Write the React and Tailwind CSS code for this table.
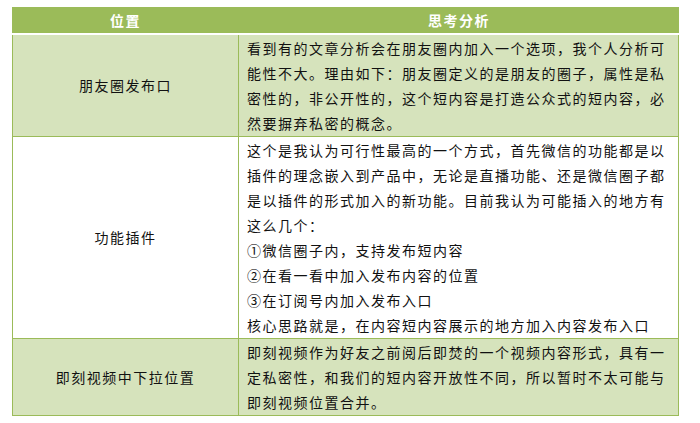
import React from "react";

const rows = [
  {
    label: "朋友圈发布口",
    bg: "bg-[#d6e3bc]",
    lines: [
      "看到有的文章分析会在朋友圈内加入一个选项，我个人分析可",
      "能性不大。理由如下：朋友圈定义的是朋友的圈子，属性是私",
      "密性的，非公开性的，这个短内容是打造公众式的短内容，必",
      "然要摒弃私密的概念。",
    ],
  },
  {
    label: "功能插件",
    bg: "bg-white",
    lines: [
      "这个是我认为可行性最高的一个方式，首先微信的功能都是以",
      "插件的理念嵌入到产品中，无论是直播功能、还是微信圈子都",
      "是以插件的形式加入的新功能。目前我认为可能插入的地方有",
      "这么几个：",
      "①微信圈子内，支持发布短内容",
      "②在看一看中加入发布内容的位置",
      "③在订阅号内加入发布入口",
      "核心思路就是，在内容短内容展示的地方加入内容发布入口",
    ],
  },
  {
    label: "即刻视频中下拉位置",
    bg: "bg-[#d6e3bc]",
    lines: [
      "即刻视频作为好友之前阅后即焚的一个视频内容形式，具有一",
      "定私密性，和我们的短内容开放性不同，所以暂时不太可能与",
      "即刻视频位置合并。",
    ],
  },
];

export default function App() {
  return (
    <div
      className="w-[700px] h-[423px] bg-white pl-[12px] pt-[7px] overflow-hidden"
      style={{ fontFamily: '"Noto Sans CJK SC", "Noto Sans", sans-serif' }}
    >
      <div className="w-[667px]">
        <div className="flex h-[28px] bg-[#9bbb59] border-b-2 border-white text-white font-bold text-[14px] tracking-[1.5px]">
          <div className="w-[227px] flex items-center justify-center">位置</div>
          <div className="flex-1 flex items-center justify-center">思考分析</div>
        </div>
        {rows.map((r, i) => (
          <div
            key={i}
            className={`flex border-x border-b border-[#9bbb59] ${r.bg} text-[14px] tracking-[1.5px] text-[#111] leading-[25px]`}
          >
            <div className="w-[226px] border-r border-[#9bbb59] flex items-center justify-center">
              {r.label}
            </div>
            <div className="flex-1 pl-[8px] pt-px flex flex-col">
              {r.lines.map((l, j) => (
                <div key={j} className="whitespace-nowrap">
                  {l}
                </div>
              ))}
            </div>
          </div>
        ))}
      </div>
    </div>
  );
}
